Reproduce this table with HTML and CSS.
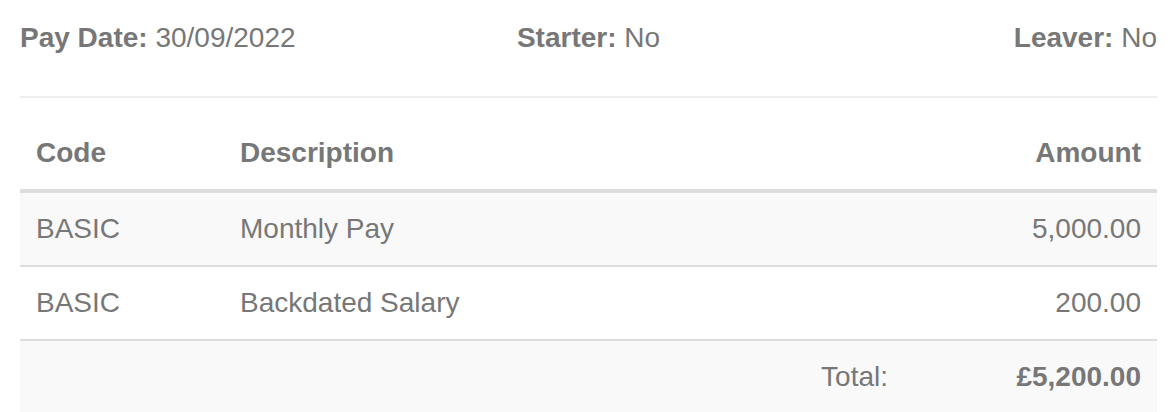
FILE: index.html
```html
<!DOCTYPE html>
<html lang="en">
<head>
<meta charset="utf-8">
<title>Payslip</title>
<link rel="stylesheet" href="styles.css">
</head>
<body>
<div class="payslip">
  <div class="meta">
    <div class="meta-item meta-left"><b>Pay Date:</b> 30/09/2022</div>
    <div class="meta-item meta-center"><b>Starter:</b> No</div>
    <div class="meta-item meta-right"><b>Leaver:</b> No</div>
  </div>
  <hr class="divider">
  <table class="lines">
    <colgroup>
      <col class="col-code">
      <col class="col-desc">
      <col class="col-amount">
    </colgroup>
    <thead>
      <tr>
        <th class="cell-left">Code</th>
        <th class="cell-left">Description</th>
        <th class="cell-right">Amount</th>
      </tr>
    </thead>
    <tbody>
      <tr class="row-striped">
        <td>BASIC</td>
        <td>Monthly Pay</td>
        <td class="cell-right">5,000.00</td>
      </tr>
      <tr>
        <td>BASIC</td>
        <td>Backdated Salary</td>
        <td class="cell-right">200.00</td>
      </tr>
      <tr class="row-striped row-total">
        <td></td>
        <td class="cell-right">Total:</td>
        <td class="cell-right"><b>£5,200.00</b></td>
      </tr>
    </tbody>
  </table>
</div>
</body>
</html>
```

FILE: styles.css
```css
html, body {
  margin: 0;
  padding: 0;
  background: #ffffff;
}

body {
  font-family: "Liberation Sans", Arial, Helvetica, sans-serif;
  font-size: 28px;
  color: #777777;
}

.payslip {
  padding: 18px 19px 0 20px;
}

.meta {
  display: grid;
  grid-template-columns: repeat(3, 1fr);
  line-height: 40px;
}

.meta b {
  font-weight: bold;
}

.meta-left { text-align: left; }
.meta-center { text-align: center; }
.meta-right { text-align: right; }

.divider {
  margin: 38px 0 0 0;
  border: 0;
  border-top: 2px solid #eeeeee;
  height: 0;
}

.lines {
  width: 100%;
  margin-top: 19px;
  border-collapse: separate;
  border-spacing: 0;
  table-layout: fixed;
}

.col-code { width: 204px; }
.col-amount { width: 253px; }

.lines th,
.lines td {
  padding: 16px;
  line-height: 40px;
  height: 40px;
  text-align: left;
  vertical-align: middle;
  white-space: nowrap;
}

.lines th {
  font-weight: bold;
  border-bottom: 4px solid #dddddd;
}

.lines tbody tr td {
  border-bottom: 2px solid #dddddd;
}

.lines tbody tr.row-total td {
  border-bottom: 0;
}

.row-striped td {
  background: #f9f9f9;
}

.lines .cell-right {
  text-align: right;
}
```
